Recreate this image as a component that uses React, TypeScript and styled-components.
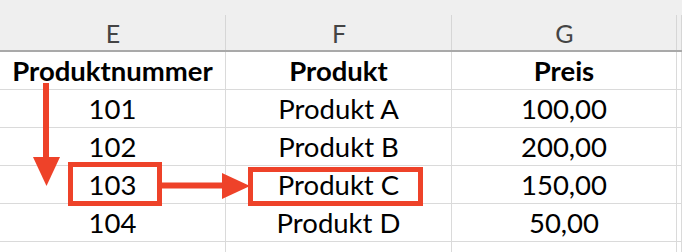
import React from "react";
import styled, { createGlobalStyle } from "styled-components";

const GlobalStyle = createGlobalStyle`
  html, body {
    margin: 0;
    padding: 0;
    background: #ffffff;
  }
  body {
    font-family: Lato, "Noto Sans", sans-serif;
  }
`;

const Sheet = styled.div`
  position: relative;
  width: 682px;
  height: 252px;
  overflow: hidden;
  background: #ffffff;
`;

const Grid = styled.div`
  display: grid;
  grid-template-columns: 226px 226px 225px 1fr;
`;

const ColumnHead = styled.div`
  height: 52px;
  box-sizing: border-box;
  background: #efefef;
  border-bottom: 2px solid #a9a9a9;
  display: flex;
  align-items: flex-end;
  justify-content: center;
  position: relative;
  padding-bottom: 2px;
  font-size: 25px;
  color: #444444;
  font-weight: 400;

  &::after {
    content: "";
    position: absolute;
    right: 0;
    top: 15px;
    bottom: 0;
    width: 1px;
    background: #d6d6d6;
  }
`;

const Cell = styled.div<{ $bold?: boolean }>`
  height: 38px;
  box-sizing: border-box;
  border-right: 1px solid #dadada;
  border-bottom: 1px solid #dadada;
  display: flex;
  align-items: flex-end;
  justify-content: center;
  padding-bottom: 2px;
  font-size: 27.5px;
  font-weight: ${(p) => (p.$bold ? 700 : 400)};
  color: #000000;
  white-space: nowrap;
`;

const Overlay = styled.svg`
  position: absolute;
  left: 0;
  top: 0;
  pointer-events: none;
`;

const RED = "#ee4229";

const columns = ["E", "F", "G", ""];
const header = ["Produktnummer", "Produkt", "Preis", ""];
const rows = [
  ["101", "Produkt A", "100,00", ""],
  ["102", "Produkt B", "200,00", ""],
  ["103", "Produkt C", "150,00", ""],
  ["104", "Produkt D", "50,00", ""],
  ["", "", "", ""],
];

const App = () => {
  return (
    <Sheet>
      <GlobalStyle />
      <Grid>
        {columns.map((c, i) => (
          <ColumnHead key={"c" + i}>{c}</ColumnHead>
        ))}
        {header.map((h, i) => (
          <Cell key={"h" + i} $bold>
            {h}
          </Cell>
        ))}
        {rows.map((r, ri) =>
          r.map((v, ci) => <Cell key={ri + "-" + ci}>{v}</Cell>)
        )}
      </Grid>
      {/* arrows and highlight boxes drawn over the grid */}
      <Overlay width="682" height="252" viewBox="0 0 682 252">
        <rect x="43" y="83" width="6" height="76" fill={RED} />
        <polygon points="33,157 60,157 46.5,186" fill={RED} />
        <rect x="70.5" y="164.5" width="89" height="39" fill="none" stroke={RED} strokeWidth="5" />
        <rect x="162" y="182.5" width="62" height="6" fill={RED} />
        <polygon points="222,173 222,199 250,186" fill={RED} />
        <rect x="250.5" y="169.5" width="170" height="34" fill="none" stroke={RED} strokeWidth="5" />
      </Overlay>
    </Sheet>
  );
};

export default App;
